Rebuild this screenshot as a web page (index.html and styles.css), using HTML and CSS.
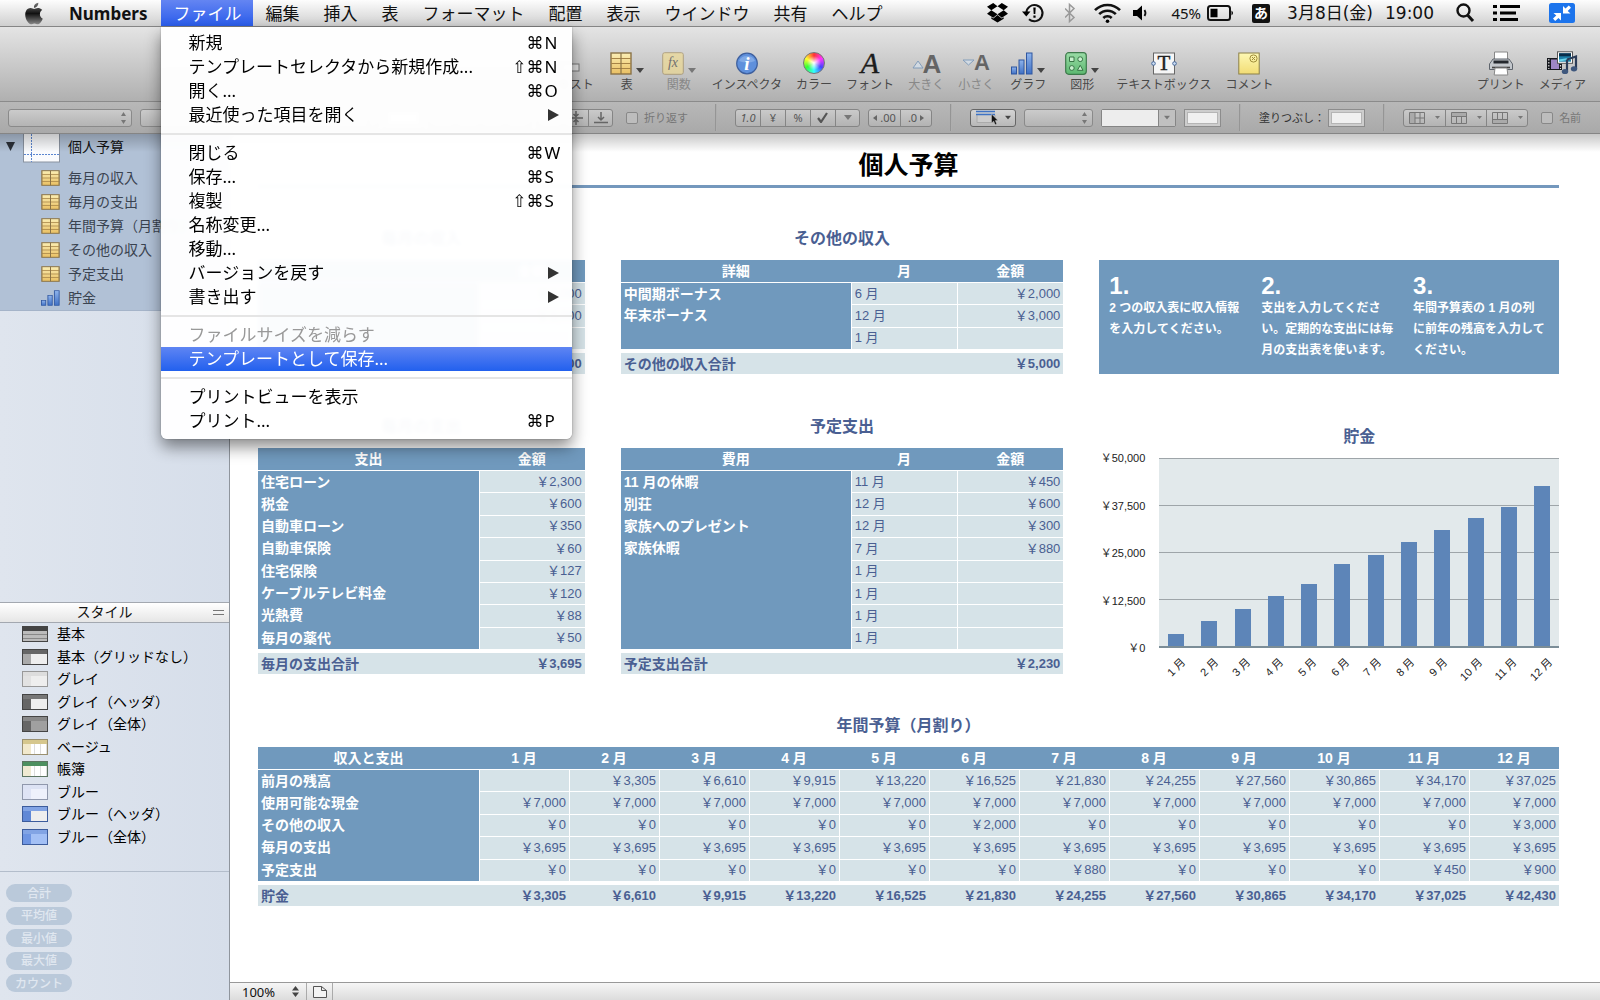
FILE: index.html
```html
<!DOCTYPE html>
<html lang="ja">
<head>
  <meta charset="UTF-8" />
  <meta name="viewport" content="width=device-width, initial-scale=1" />
  <title>Numbers - 個人予算</title>
  <link rel="stylesheet" href="styles.css">
</head>
<body>
  <!-- Shared icons -->
  <svg class="sprite" width="0" height="0" aria-hidden="true">
    <defs>
      <linearGradient id="gold" x1="0" y1="0" x2="0" y2="1"><stop offset="0" stop-color="#fbeeb4"/><stop offset="1" stop-color="#e9bf62"/></linearGradient>
      <linearGradient id="blue" x1="0" y1="0" x2="0" y2="1"><stop offset="0" stop-color="#8fb4ec"/><stop offset="1" stop-color="#3f70c4"/></linearGradient>
      <linearGradient id="green" x1="0" y1="0" x2="0" y2="1"><stop offset="0" stop-color="#9adca6"/><stop offset="1" stop-color="#5cb870"/></linearGradient>
      <linearGradient id="note" x1="0" y1="0" x2="0" y2="1"><stop offset="0" stop-color="#fdf8b4"/><stop offset="1" stop-color="#f2dc74"/></linearGradient>
      <linearGradient id="dark" x1="0" y1="0" x2="0" y2="1"><stop offset="0" stop-color="#777"/><stop offset=".5" stop-color="#111"/><stop offset="1" stop-color="#888"/></linearGradient>
    </defs>
    <symbol id="i-table" viewBox="0 0 22 23">
      <rect x="1" y="1" width="20" height="21" fill="url(#gold)" stroke="#8a7347" stroke-width="1.4"/>
      <path d="M1 6.5h20M1 11.5h20M1 16.5h20" stroke="#a68346"/>
      <path d="M11 1v21" stroke="#8a7347" stroke-width="1.2"/>
    </symbol>
    <symbol id="i-chart" viewBox="0 0 22 23">
      <g fill="url(#blue)" stroke="#2f56a0" stroke-width="1"><rect x=".5" y="15" width="5" height="7"/><rect x="8" y="8" width="5" height="14"/><rect x="15.5" y="1" width="5.5" height="21"/></g>
    </symbol>
    <symbol id="i-drop" viewBox="0 0 8 5"><path d="M0 0h8L4 5z" fill="currentColor"/></symbol>
  </svg>

  <!-- Menu bar -->
  <header class="menubar">
    <nav class="menus">
      <button class="menu-title apple" aria-label="Apple">
        <svg width="18" height="23" viewBox="2 0 20 24"><path fill="url(#dark)" d="M12.152 6.896c-.948 0-2.415-1.078-3.96-1.04-2.04.027-3.91 1.183-4.961 3.014-2.117 3.675-.546 9.103 1.519 12.09 1.013 1.454 2.208 3.09 3.792 3.039 1.52-.065 2.09-.987 3.935-.987 1.831 0 2.35.987 3.96.948 1.637-.026 2.676-1.48 3.676-2.948 1.156-1.688 1.636-3.325 1.662-3.415-.039-.013-3.182-1.221-3.22-4.857-.026-3.04 2.48-4.494 2.597-4.559-1.429-2.09-3.623-2.324-4.39-2.376-2-.156-3.675 1.09-4.61 1.09zM15.53 3.83c.843-1.012 1.4-2.427 1.245-3.83-1.207.052-2.662.805-3.532 1.818-.78.896-1.454 2.338-1.273 3.714 1.338.104 2.715-.688 3.559-1.701"/></svg>
      </button>
      <button class="menu-title app">Numbers</button>
      <div class="menu-wrap">
        <button class="menu-title open">ファイル</button>
        <ul class="menu">
          <li><button class="item">新規<span class="keys">⌘<b>N</b></span></button></li>
          <li><button class="item">テンプレートセレクタから新規作成...<span class="keys">⇧⌘<b>N</b></span></button></li>
          <li><button class="item">開く...<span class="keys">⌘<b>O</b></span></button></li>
          <li><button class="item">最近使った項目を開く<svg class="sub" width="11" height="12"><path d="M0 0l11 6-11 6z"/></svg></button></li>
          <li class="rule"></li>
          <li><button class="item">閉じる<span class="keys">⌘<b>W</b></span></button></li>
          <li><button class="item">保存...<span class="keys">⌘<b>S</b></span></button></li>
          <li><button class="item">複製<span class="keys">⇧⌘<b>S</b></span></button></li>
          <li><button class="item">名称変更...</button></li>
          <li><button class="item">移動...</button></li>
          <li><button class="item">バージョンを戻す<svg class="sub" width="11" height="12"><path d="M0 0l11 6-11 6z"/></svg></button></li>
          <li><button class="item">書き出す<svg class="sub" width="11" height="12"><path d="M0 0l11 6-11 6z"/></svg></button></li>
          <li class="rule"></li>
          <li><button class="item" disabled>ファイルサイズを減らす</button></li>
          <li><button class="item active">テンプレートとして保存...</button></li>
          <li class="rule"></li>
          <li><button class="item">プリントビューを表示</button></li>
          <li><button class="item">プリント...<span class="keys">⌘<b>P</b></span></button></li>
        </ul>
      </div>
      <button class="menu-title">編集</button>
      <button class="menu-title">挿入</button>
      <button class="menu-title">表</button>
      <button class="menu-title">フォーマット</button>
      <button class="menu-title">配置</button>
      <button class="menu-title">表示</button>
      <button class="menu-title">ウインドウ</button>
      <button class="menu-title">共有</button>
      <button class="menu-title">ヘルプ</button>
    </nav>
    <div class="status">
      <svg width="23" height="22" viewBox="0 0 23 22"><path d="M6.200 1L0 4.800l4.300 3.400 6.200-3.900zM14.800 1l-4.300 3.300 6.200 3.900L21 4.800zM4.300 8.300L0 11.700l6.200 4 4.300-3.500zM16.700 8.300l-6.200 3.900 4.300 3.500 6.200-4zM10.500 13.100l-4.200 3.400-2-1.200v1.500l6.200 3.800 6.200-3.800v-1.500l-2 1.200z"/></svg>
      <svg width="31" height="22" viewBox="0 0 31 22"><path d="M4.300 11a8.100 8.100 0 1 1 2.700 6.200" fill="none" stroke="#111" stroke-width="2"/><path d="M0 9.500h8.500L4.300 14.500z"/><path d="M11.300 5.500h2.400l-.4 6.500h-1.600zM11.400 13.500h2.200v2.200h-2.200z"/></svg>
      <svg width="17" height="22" viewBox="0 0 17 22"><path d="M0 6.500l9 9-4.500 4v-17l4.500 4-9 9" fill="none" stroke="#999" stroke-width="1.500"/></svg>
      <svg width="27" height="22" viewBox="0 0 27 22"><g fill="none" stroke="#111" stroke-width="2.600"><path d="M1 8.200a17.500 17.500 0 0 1 25 0"/><path d="M5.200 12.200a11.600 11.600 0 0 1 16.600 0"/><path d="M9.300 16a6 6 0 0 1 8.400 0"/></g><circle cx="13.500" cy="19.300" r="1.800"/></svg>
      <svg width="26" height="22" viewBox="0 0 26 22"><path d="M0 8h4l5-4.500v15L4 14H0z"/><path d="M11.500 8q2 3 0 6" fill="none" stroke="#111" stroke-width="1.800"/></svg>
      <div class="battery">
        <span>45%</span>
        <svg width="33" height="16" viewBox="0 0 33 16"><rect x="1" y="1" width="22" height="14" rx="2.500" fill="none" stroke="#111" stroke-width="2"/><path d="M3.500 3.800h7v8.400h-7zM24.500 5.500q3 2.500 0 5z"/></svg>
      </div>
      <span class="ime">あ</span>
      <div class="clock"><span>3月8日(金)</span><span>19:00</span></div>
      <svg width="25" height="22" viewBox="0 0 25 22"><circle cx="7.500" cy="8.500" r="6" fill="none" stroke="#111" stroke-width="2.400"/><path d="M11.500 13l5.500 6" stroke="#111" stroke-width="3"/></svg>
      <svg width="44" height="22" viewBox="0 0 44 22"><path d="M0 3h4v3H0zM0 9.500h4v3H0zM0 16h4v3H0zM7 3h20v3H7zM7 9.500h16v3H7zM7 16h18v3H7z"/></svg>
      <svg width="26" height="20" viewBox="0 0 26 20"><rect width="26" height="20" rx="2.500" fill="#1c74ec"/><path d="M14 3v7.500h7.500L18.700 8 22 4.800 19.800 2.500 16.500 5.600zM12 17.500V10H4.500l2.800 2.600L4 15.600l2.200 2.300 3.300-3z" fill="#fff"/></svg>
    </div>
  </header>

  <!-- Toolbar -->
  <div class="toolbar">
    <button class="tool">
      <span class="tool-icon"><svg width="22" height="23"><rect x="2" y="12" width="18" height="7" fill="#ddd" stroke="#777"/></svg></span>テキスト
    </button>
    <button class="tool drop">
      <span class="tool-icon"><svg width="22" height="23"><use href="#i-table"/></svg><svg class="tri" width="8" height="5"><use href="#i-drop"/></svg></span>表
    </button>
    <button class="tool drop" disabled>
      <span class="tool-icon"><svg width="22" height="23" viewBox="0 0 22 23"><rect x=".7" y=".7" width="20.600" height="21.600" rx="2" fill="#f3dc8a" stroke="#9c8450"/><text x="11" y="15" text-anchor="middle" font-family="Liberation Serif" font-style="italic" font-size="14" fill="#333">fx</text></svg><svg class="tri" width="8" height="5"><use href="#i-drop"/></svg></span>関数
    </button>
    <button class="tool">
      <span class="tool-icon"><svg width="22" height="23" viewBox="0 0 22 23"><circle cx="11" cy="11.500" r="10.300" fill="#5f90dc" stroke="#3d5f9e" stroke-width="1.200"/><path d="M3 9a8.500 7.500 0 0 1 16 0q-8 3-16 0z" fill="#8fb3ea" opacity=".7"/><text x="11" y="18" text-anchor="middle" font-family="Liberation Serif" font-style="italic" font-weight="bold" font-size="19" fill="#fff">i</text></svg></span>インスペクタ
    </button>
    <button class="tool"><span class="tool-icon"><i class="wheel"></i></span>カラー</button>
    <button class="tool">
      <span class="tool-icon"><svg width="32" height="26" viewBox="0 0 32 26"><text x="16" y="23" text-anchor="middle" font-family="Liberation Serif" font-style="italic" font-size="30" fill="#1c1c1c" stroke="#1c1c1c" stroke-width=".4">A</text></svg></span>フォント
    </button>
    <button class="tool" disabled>
      <span class="tool-icon"><svg width="36" height="26" viewBox="0 0 36 26"><path d="M5 18l5-7 5 7z" fill="#d8e6f4" stroke="#5580b0"/><text x="24" y="23" text-anchor="middle" font-family="Liberation Sans" font-weight="bold" font-size="26" fill="#222">A</text></svg></span>大きく
    </button>
    <button class="tool" disabled>
      <span class="tool-icon"><svg width="36" height="26" viewBox="0 0 36 26"><path d="M5 10h11l-5.500 5z" fill="#d8e6f4" stroke="#5580b0"/><text x="24" y="20" text-anchor="middle" font-family="Liberation Sans" font-weight="bold" font-size="22" fill="#222">A</text></svg></span>小さく
    </button>
    <button class="tool drop roomy">
      <span class="tool-icon"><svg width="22" height="23"><use href="#i-chart"/></svg><svg class="tri" width="8" height="5"><use href="#i-drop"/></svg></span>グラフ
    </button>
    <button class="tool drop roomy">
      <span class="tool-icon"><svg width="22" height="23" viewBox="0 0 22 23"><rect x=".7" y=".7" width="20.600" height="21.600" rx="3" fill="url(#green)" stroke="#3e7a4c" stroke-width="1.200"/><g fill="#c9f0cf" stroke="#2f6b3d" stroke-width=".9"><path d="M4.500 5h4.500v4.500H4.500zM15.200 13.300l2.800 5h-5.600z"/><circle cx="15.200" cy="7.200" r="2.400"/><circle cx="6.800" cy="16" r="2.400"/></g></svg><svg class="tri" width="8" height="5"><use href="#i-drop"/></svg></span>図形
    </button>
    <button class="tool">
      <span class="tool-icon"><svg width="26" height="23" viewBox="0 0 26 23"><rect x="2.500" y="1" width="21" height="21" fill="#f6f6f6" stroke="#666"/><text x="13" y="18" text-anchor="middle" font-family="Liberation Serif" font-size="21" fill="#222" stroke="#222" stroke-width=".4">T</text><circle cx="2.500" cy="11.500" r="1.800" fill="#cfe0f5" stroke="#46679a"/><circle cx="23.500" cy="11.500" r="1.800" fill="#cfe0f5" stroke="#46679a"/></svg></span>テキストボックス
    </button>
    <button class="tool">
      <span class="tool-icon"><svg width="22" height="23" viewBox="0 0 22 23"><rect x=".8" y="1" width="20.400" height="21" fill="url(#note)" stroke="#8c8048"/><circle cx="15.500" cy="6.500" r="3.600" fill="none" stroke="#a08d3a"/><path d="M14 5l3 3m0-3l-3 3" stroke="#a08d3a"/></svg></span>コメント
    </button>
    <span class="grow"></span>
    <button class="tool">
      <span class="tool-icon"><svg width="24" height="25" viewBox="0 0 24 25"><path d="M5.500 1h13v10h-13z" fill="#fff" stroke="#888"/><path d="M4 8h16l3.500 5v5.500H.5V13z" fill="#c3c7cc" stroke="#5e646c"/><path d="M4.500 9.500h15v3h-15z" fill="#24282e"/><path d="M3 16.500h18" stroke="#444" stroke-width="1.600"/><path d="M6 17h12l.8 7H5.200z" fill="#fff" stroke="#888"/></svg></span>プリント
    </button>
    <button class="tool">
      <span class="tool-icon"><svg width="32" height="25" viewBox="0 0 32 25"><path d="M1 7h15v12H1z" fill="#16181d"/><path d="M5 8.500h8V18H5z" fill="#9d86c4"/><path d="M2.800 8v10M14.500 8v10" stroke="#ddd" stroke-width="1.200" stroke-dasharray="1.500 1.500"/><rect x="11.500" y=".8" width="15" height="11.500" fill="#fff" stroke="#555"/><path d="M13 2.300h12v8.400H13z" fill="#1d7fa8"/><path d="M13 2.300h12v3H13z" fill="#092d49"/><path d="M13 8.500l12-2v2l-12 2z" fill="#6bd5ea"/><path d="M21 8.500l9-3v12.500" fill="none" stroke="#2b3c58" stroke-width="2.200"/><path d="M21 8.500v12" stroke="#2b3c58" stroke-width="2.200"/><ellipse cx="19" cy="20.500" rx="3.200" ry="2.600" fill="#3e577d"/><ellipse cx="28" cy="17.800" rx="3.200" ry="2.600" fill="#3e577d"/></svg></span>メディア
    </button>
  </div>

  <!-- Format bar -->
  <div class="formatbar">
    <select class="pop" aria-label="フォント"><option></option></select>
    <select class="pop" aria-label="書体"><option></option></select>
    <select class="pop size" aria-label="サイズ"><option></option></select>
    <button class="well" aria-label="テキストカラー"></button>
    <div class="segs"><button></button><button></button><button></button><button></button></div>
    <div class="segs">
      <button aria-label="上"></button>
      <button aria-label="中央"><svg width="14" height="14"><path d="M0 7h14M7 0v5M7 14V9M4.500 3L7 5.500 9.500 3M4.500 11L7 8.500 9.500 11" fill="none" stroke="#666" stroke-width="1.500"/></svg></button>
      <button aria-label="下"><svg width="14" height="12"><path d="M0 10.500h14M7 0v7M4 5l3 3 3-3" fill="none" stroke="#666" stroke-width="1.500"/></svg></button>
    </div>
    <label class="check wrap"><input type="checkbox">折り返す</label>
    <span class="sep"></span>
    <div class="segs">
      <button><i>1.0</i></button>
      <button>¥</button>
      <button>%</button>
      <button aria-label="チェック"><svg width="12" height="11"><path d="M1 6l3 4 6-9" fill="none" stroke="#555" stroke-width="2.200"/></svg></button>
      <button aria-label="その他"><svg class="tri dim" width="8" height="5"><use href="#i-drop"/></svg></button>
    </div>
    <div class="segs wide">
      <button><svg width="4" height="6"><path d="M4 0v6L0 3z" fill="#666"/></svg>.00</button>
      <button>.0<svg width="4" height="6"><path d="M0 0v6l4-3z" fill="#666"/></svg></button>
    </div>
    <span class="sep"></span>
    <button class="borders" aria-label="枠線">
      <svg width="24" height="15" viewBox="0 0 24 15"><path d="M1 5v7.500h18V5" fill="#ccc" stroke="#aaa"/><path d="M0 1.500h19M0 4.500h19" stroke="#3f73c4" stroke-width="1.400"/><path d="M15.500 4v9l2.200-1.800 1.500 3.500 1.600-.7-1.500-3.400h2.700z" fill="#111" stroke="#ddd" stroke-width=".4"/></svg>
      <svg width="6" height="5" viewBox="0 0 8 6" class="tri"><use href="#i-drop"/></svg>
    </button>
    <select class="pop line" aria-label="線"><option></option></select>
    <div class="combo"><input type="text" aria-label="線の太さ"><button aria-label="選択"><svg class="tri dim" width="6" height="5" viewBox="0 0 8 6"><use href="#i-drop"/></svg></button></div>
    <button class="well" aria-label="線のカラー"></button>
    <span class="sep"></span>
    <label class="fill" for="fill">塗りつぶし：</label>
    <button class="well" id="fill"></button>
    <span class="sep"></span>
    <div class="segs headers">
      <button aria-label="ヘッダ列"><svg width="16" height="12"><path d="M1 1h5v10H1z" fill="#aaa"/><path d="M.5.500h15v11H.5zM6 .5v11M11 .5v11M6 6h10" fill="none" stroke="#777"/></svg><svg class="tri dim" width="5" height="5" viewBox="0 0 8 6"><use href="#i-drop"/></svg></button>
      <button aria-label="ヘッダ行"><svg width="16" height="12"><path d="M1 1h14v3H1z" fill="#aaa"/><path d="M.5.500h15v11H.5zM.5 4.500h15M5.500 5v6M10.500 5v6" fill="none" stroke="#777"/></svg><svg class="tri dim" width="5" height="5" viewBox="0 0 8 6"><use href="#i-drop"/></svg></button>
      <button aria-label="フッタ行"><svg width="16" height="12"><path d="M1 8h14v3H1z" fill="#aaa"/><path d="M.5.500h15v11H.5zM.5 7.500h15M5.500 0v7M10.500 0v7" fill="none" stroke="#777"/></svg><svg class="tri dim" width="5" height="5" viewBox="0 0 8 6"><use href="#i-drop"/></svg></button>
    </div>
    <label class="check"><input type="checkbox">名前</label>
  </div>

  <div class="workspace">
    <!-- Sidebar -->
    <aside class="sidebar">
      <div class="sheets">
        <div class="sheet">
          <svg width="9" height="9"><path d="M0 0h9L4.500 9z" fill="#2b3038"/></svg>
          <svg class="page" width="37" height="29"><rect x=".5" y="-1" width="36" height="29" fill="#fafbfd" stroke="#8a93a0"/><path d="M8.500 0v28M1 20.500h35" stroke="#5b86d0" stroke-dasharray="2 1"/></svg>
          個人予算
        </div>
        <ul class="objects">
          <li><svg width="19" height="16" viewBox="0 0 22 23" preserveAspectRatio="none"><use href="#i-table"/></svg>毎月の収入</li>
          <li><svg width="19" height="16" viewBox="0 0 22 23" preserveAspectRatio="none"><use href="#i-table"/></svg>毎月の支出</li>
          <li><svg width="19" height="16" viewBox="0 0 22 23" preserveAspectRatio="none"><use href="#i-table"/></svg>年間予算（月割り）</li>
          <li><svg width="19" height="16" viewBox="0 0 22 23" preserveAspectRatio="none"><use href="#i-table"/></svg>その他の収入</li>
          <li><svg width="19" height="16" viewBox="0 0 22 23" preserveAspectRatio="none"><use href="#i-table"/></svg>予定支出</li>
          <li><svg width="19" height="16" viewBox="0 0 22 23" preserveAspectRatio="none"><use href="#i-chart"/></svg>貯金</li>
        </ul>
      </div>
      <h2 class="styles-title">スタイル<span class="grip"></span></h2>
      <ul class="styles">
        <li><i class="swatch basic"></i>基本</li>
        <li><i class="swatch basic-plain"></i>基本（グリッドなし）</li>
        <li><i class="swatch gray"></i>グレイ</li>
        <li><i class="swatch gray-head"></i>グレイ（ヘッダ）</li>
        <li><i class="swatch gray-full"></i>グレイ（全体）</li>
        <li><i class="swatch beige"></i>ベージュ</li>
        <li><i class="swatch ledger"></i>帳簿</li>
        <li><i class="swatch blue"></i>ブルー</li>
        <li><i class="swatch blue-head"></i>ブルー（ヘッダ）</li>
        <li><i class="swatch blue-full"></i>ブルー（全体）</li>
      </ul>
      <div class="quick">
        <button>合計</button>
        <button>平均値</button>
        <button>最小値</button>
        <button>最大値</button>
        <button>カウント</button>
      </div>
    </aside>

    <!-- Sheet -->
    <main class="canvas">
      <div class="sheet-body">
        <h1>個人予算</h1>
        <div class="columns">
          <div class="column">
            <section>
              <h3>毎月の収入</h3>
              <table class="small two">
                <thead><tr><th class="first"></th><th>金額</th></tr></thead>
                <tbody>
                  <tr><th></th><td>￥4,000</td></tr>
                  <tr><th></th><td>￥3,000</td></tr>
                  <tr><th></th><td></td></tr>
                </tbody>
                <tfoot><tr><th></th><td>￥7,000</td></tr></tfoot>
              </table>
            </section>
            <section>
              <h3>毎月の支出</h3>
              <table class="large two">
                <thead><tr><th class="first">支出</th><th>金額</th></tr></thead>
                <tbody>
                  <tr><th>住宅ローン</th><td>￥2,300</td></tr>
                  <tr><th>税金</th><td>￥600</td></tr>
                  <tr><th>自動車ローン</th><td>￥350</td></tr>
                  <tr><th>自動車保険</th><td>￥60</td></tr>
                  <tr><th>住宅保険</th><td>￥127</td></tr>
                  <tr><th>ケーブルテレビ料金</th><td>￥120</td></tr>
                  <tr><th>光熱費</th><td>￥88</td></tr>
                  <tr><th>毎月の薬代</th><td>￥50</td></tr>
                </tbody>
                <tfoot><tr><th>毎月の支出合計</th><td>￥3,695</td></tr></tfoot>
              </table>
            </section>
          </div>
          <div class="column">
            <section>
              <h3>その他の収入</h3>
              <table class="small three">
                <thead><tr><th class="first">詳細</th><th>月</th><th>金額</th></tr></thead>
                <tbody>
                  <tr><th>中間期ボーナス</th><td class="month">6 月</td><td>￥2,000</td></tr>
                  <tr><th>年末ボーナス</th><td class="month">12 月</td><td>￥3,000</td></tr>
                  <tr><th></th><td class="month">1 月</td><td></td></tr>
                </tbody>
                <tfoot><tr><th>その他の収入合計</th><td></td><td>￥5,000</td></tr></tfoot>
              </table>
            </section>
            <section>
              <h3>予定支出</h3>
              <table class="large three">
                <thead><tr><th class="first">費用</th><th>月</th><th>金額</th></tr></thead>
                <tbody>
                  <tr><th>11 月の休暇</th><td class="month">11 月</td><td>￥450</td></tr>
                  <tr><th>別荘</th><td class="month">12 月</td><td>￥600</td></tr>
                  <tr><th>家族へのプレゼント</th><td class="month">12 月</td><td>￥300</td></tr>
                  <tr><th>家族休暇</th><td class="month">7 月</td><td>￥880</td></tr>
                  <tr><th></th><td class="month">1 月</td><td></td></tr>
                  <tr><th></th><td class="month">1 月</td><td></td></tr>
                  <tr><th></th><td class="month">1 月</td><td></td></tr>
                  <tr><th></th><td class="month">1 月</td><td></td></tr>
                </tbody>
                <tfoot><tr><th>予定支出合計</th><td></td><td>￥2,230</td></tr></tfoot>
              </table>
            </section>
          </div>
          <div class="column right">
            <div class="steps">
              <div><strong>1.</strong><p>2 つの収入表に収入情報<br>を入力してください。</p></div>
              <div><strong>2.</strong><p>支出を入力してくださ<br>い。定期的な支出には毎<br>月の支出表を使います。</p></div>
              <div><strong>3.</strong><p>年間予算表の 1 月の列<br>に前年の残高を入力して<br>ください。</p></div>
            </div>
            <section class="chart">
              <h3>貯金</h3>
              <div class="y-axis"><span>￥50,000</span><span>￥37,500</span><span>￥25,000</span><span>￥12,500</span><span>￥0</span></div>
              <div class="plot">
                <div><i style="height:6.6%"></i></div>
                <div><i style="height:13.2%"></i></div>
                <div><i style="height:19.8%"></i></div>
                <div><i style="height:26.4%"></i></div>
                <div><i style="height:33.1%"></i></div>
                <div><i style="height:43.7%"></i></div>
                <div><i style="height:48.5%"></i></div>
                <div><i style="height:55.1%"></i></div>
                <div><i style="height:61.7%"></i></div>
                <div><i style="height:68.3%"></i></div>
                <div><i style="height:74.1%"></i></div>
                <div><i style="height:84.9%"></i></div>
              </div>
              <div class="x-axis">
                <div><span>1 月</span></div><div><span>2 月</span></div><div><span>3 月</span></div><div><span>4 月</span></div><div><span>5 月</span></div><div><span>6 月</span></div>
                <div><span>7 月</span></div><div><span>8 月</span></div><div><span>9 月</span></div><div><span>10 月</span></div><div><span>11 月</span></div><div><span>12 月</span></div>
              </div>
            </section>
          </div>
        </div>

        <section class="annual">
          <h3>年間予算（月割り）</h3>
          <table class="year">
            <thead>
              <tr><th class="first">収入と支出</th><th>1 月</th><th>2 月</th><th>3 月</th><th>4 月</th><th>5 月</th><th>6 月</th><th>7 月</th><th>8 月</th><th>9 月</th><th>10 月</th><th>11 月</th><th>12 月</th></tr>
            </thead>
            <tbody>
              <tr><th>前月の残高</th><td></td><td>￥3,305</td><td>￥6,610</td><td>￥9,915</td><td>￥13,220</td><td>￥16,525</td><td>￥21,830</td><td>￥24,255</td><td>￥27,560</td><td>￥30,865</td><td>￥34,170</td><td>￥37,025</td></tr>
              <tr><th>使用可能な現金</th><td>￥7,000</td><td>￥7,000</td><td>￥7,000</td><td>￥7,000</td><td>￥7,000</td><td>￥7,000</td><td>￥7,000</td><td>￥7,000</td><td>￥7,000</td><td>￥7,000</td><td>￥7,000</td><td>￥7,000</td></tr>
              <tr><th>その他の収入</th><td>￥0</td><td>￥0</td><td>￥0</td><td>￥0</td><td>￥0</td><td>￥2,000</td><td>￥0</td><td>￥0</td><td>￥0</td><td>￥0</td><td>￥0</td><td>￥3,000</td></tr>
              <tr><th>毎月の支出</th><td>￥3,695</td><td>￥3,695</td><td>￥3,695</td><td>￥3,695</td><td>￥3,695</td><td>￥3,695</td><td>￥3,695</td><td>￥3,695</td><td>￥3,695</td><td>￥3,695</td><td>￥3,695</td><td>￥3,695</td></tr>
              <tr><th>予定支出</th><td>￥0</td><td>￥0</td><td>￥0</td><td>￥0</td><td>￥0</td><td>￥0</td><td>￥880</td><td>￥0</td><td>￥0</td><td>￥0</td><td>￥450</td><td>￥900</td></tr>
            </tbody>
            <tfoot>
              <tr><th>貯金</th><td>￥3,305</td><td>￥6,610</td><td>￥9,915</td><td>￥13,220</td><td>￥16,525</td><td>￥21,830</td><td>￥24,255</td><td>￥27,560</td><td>￥30,865</td><td>￥34,170</td><td>￥37,025</td><td>￥42,430</td></tr>
            </tfoot>
          </table>
        </section>
      </div>
      <footer class="statusbar">
        <button class="zoom">100%<svg width="7" height="11"><path d="M0 4.500h7L3.500 0zM0 6.500h7L3.500 11z" fill="#444"/></svg></button>
        <button class="view" aria-label="プリントビュー"><svg width="14" height="12"><path d="M.5.500h8l5 4v7H.5zM8.500.500v4h5" fill="#f4f4f4" stroke="#555"/></svg></button>
      </footer>
    </main>
  </div>
</body>
</html>
```

FILE: styles.css
```css
* {
  box-sizing: border-box;
}

body {
  margin: 0;
  height: 100vh;
  display: flex;
  flex-direction: column;
  overflow: hidden;
  font-family: "Noto Sans", "Noto Sans CJK JP", sans-serif;
  color: #111;
}

button, input, select {
  font: inherit;
  color: inherit;
  margin: 0;
  padding: 0;
  border: 0;
  background: none;
}

ul {
  list-style: none;
  margin: 0;
  padding: 0;
}

svg {
  display: block;
  flex: none;
}

.sprite {
  position: absolute;
}

/* Menu bar */
.menubar {
  display: flex;
  justify-content: space-between;
  height: 27px;
  flex: none;
  background: linear-gradient(#fdfdfd, #cfcfcf);
  border-bottom: 1px solid #858585;
  font-size: 17px;
  line-height: 26px;
  position: relative;
  z-index: 2;
}

.menus {
  display: flex;
  padding-left: 13px;
}

.menu-title {
  padding: 1px 12px 0;
  height: 26px;
  white-space: nowrap;
}

.apple {
  padding-right: 14px;
}

.app {
  padding-right: 14px;
  font-weight: 700;
}

.menu-wrap {
  position: relative;
}

.open {
  background: linear-gradient(#6485f2, #2a5ceb);
  color: #fff;
}

.status {
  display: flex;
  align-items: center;
  gap: 12px;
  padding-right: 25px;
  font-family: "DejaVu Sans", "Noto Sans CJK JP", sans-serif;
}

.battery {
  display: flex;
  align-items: center;
  gap: 6px;
  font-family: "Noto Sans", sans-serif;
  font-size: 15px;
}

.ime {
  width: 18px;
  height: 19px;
  margin-right: 5px;
  border-radius: 2px;
  background: #111;
  color: #fff;
  font-size: 14px;
  font-weight: 700;
  line-height: 18px;
  text-align: center;
}

.clock {
  display: flex;
  gap: 12px;
  padding-right: 10px;
  white-space: nowrap;
}

/* Drop-down menu */
.menu {
  position: absolute;
  top: 27px;
  left: 0;
  width: 411px;
  padding: 4px 0 6px;
  background: rgba(255, 255, 255, 0.97);
  backdrop-filter: blur(2px);
  border-radius: 0 0 6px 6px;
  box-shadow: 0 8px 16px rgba(0, 0, 0, 0.45), 0 0 2px rgba(0, 0, 0, 0.3);
}

.item {
  display: flex;
  align-items: center;
  width: 100%;
  height: 24px;
  padding: 0 13px 0 27px;
  line-height: 24px;
  color: #000;
  text-align: left;
}

.item:disabled {
  color: #999;
}

.item.active {
  background: linear-gradient(#5f85f3, #2260ee);
  color: #fff;
}

.keys {
  margin-left: auto;
  display: flex;
  font-family: "DejaVu Sans", sans-serif;
}

.keys b {
  width: 15px;
  margin-left: 1px;
  font-family: "Noto Sans", sans-serif;
  font-weight: 400;
}

.sub {
  margin-left: auto;
  fill: #333;
}

.rule {
  height: 14px;
  padding-top: 6px;
}

.rule::before {
  content: "";
  display: block;
  height: 2px;
  background: #e5e5e5;
}

/* Toolbar */
.toolbar {
  display: flex;
  flex: none;
  height: 75px;
  padding: 23px 7px 0 539px;
  background: linear-gradient(#e4e4e4, #b0b0b0);
  border-bottom: 1px solid #8b8b8b;
}

.tool {
  display: flex;
  flex-direction: column;
  align-items: center;
  height: 46px;
  padding: 0 7px;
  font-size: 12px;
  line-height: 18px;
  color: #484848;
  white-space: nowrap;
}

.tool.drop {
  width: 52px;
}

.tool.roomy {
  width: 54px;
}

.tool:disabled {
  color: #888;
}

.tool:disabled .tool-icon {
  opacity: 0.6;
}

.tool-icon {
  display: flex;
  align-items: center;
  gap: 4px;
  height: 26px;
}

.tri {
  color: #444;
}

.tool .tri {
  align-self: flex-end;
  margin-bottom: 3px;
}

.tri.dim {
  color: #777;
}

.wheel {
  width: 22px;
  height: 22px;
  border: 1px solid #777;
  border-radius: 50%;
  background: radial-gradient(#fff, rgba(255, 255, 255, 0) 50%), conic-gradient(#f33, #f3f, #44f, #3ff, #3f3, #ff3, #f33);
}

.grow {
  flex: 1;
}

/* Format bar */
.formatbar {
  display: flex;
  align-items: center;
  gap: 8px;
  flex: none;
  height: 32px;
  padding: 0 0 0 8px;
  background: linear-gradient(#b8b8b8, #a9a9a9);
  border-bottom: 1px solid #858585;
  font-size: 11px;
  line-height: 16px;
  color: #444;
  overflow: hidden;
}

.formatbar > * {
  flex: none;
}

.pop {
  appearance: none;
  width: 124px;
  height: 18px;
  border: 1px solid #8a8a8a;
  border-radius: 3px;
  background: url("data:image/svg+xml,%3Csvg xmlns='http://www.w3.org/2000/svg' width='5' height='12'%3E%3Cpath d='M0 4h5L2.500 0zM0 8h5L2.500 12z' fill='%23777'/%3E%3C/svg%3E") no-repeat right 5px center, linear-gradient(#cbcbcb, #b4b4b4);
}

.pop.size {
  width: 105px;
}

.pop.line {
  width: 69px;
}

.well {
  width: 37px;
  height: 18px;
  border: 1px solid #8c8c8c;
  background: #f0f0f0;
  box-shadow: inset 0 0 0 2px #cdcdcd, inset 0 0 0 3px #b5b5b5;
}

.segs {
  display: flex;
  height: 18px;
  border: 1px solid #858585;
  border-radius: 3px;
  background: linear-gradient(#cacaca, #b3b3b3);
}

.segs button {
  display: flex;
  align-items: center;
  justify-content: center;
  width: 25px;
  color: #555;
}

.segs button:first-child {
  width: 24px;
}

.segs button:last-child {
  width: 24px;
}

.segs button + button {
  border-left: 1px solid #858585;
}

.segs.wide button {
  width: 31px;
  gap: 3px;
}

.segs.headers button {
  width: 41px;
  gap: 10px;
}

.check {
  display: flex;
  align-items: center;
  gap: 6px;
  color: #777;
}

.check.wrap {
  margin: 0 9px 0 5px;
}

.check input {
  appearance: none;
  width: 12px;
  height: 12px;
  border: 1px solid #888;
  border-radius: 2px;
  background: #bdbdbd;
}

.headers + .check {
  margin-left: 5px;
}

.sep {
  width: 2px;
  height: 27px;
  margin: 0 10px;
  background: linear-gradient(90deg, #888, #bbb);
}

.borders {
  display: flex;
  align-items: center;
  justify-content: center;
  gap: 5px;
  width: 46px;
  height: 18px;
  border: 1px solid #666;
  border-radius: 3px;
  background: linear-gradient(#d4d4d4, #b8b8b8);
}

.combo {
  display: flex;
  height: 18px;
  border: 1px solid #858585;
  border-radius: 2px;
}

.combo input {
  width: 56px;
  background: #ededed;
}

.combo button {
  display: flex;
  align-items: center;
  justify-content: center;
  width: 17px;
  border-left: 1px solid #858585;
  background: #c0c0c0;
}

.fill {
  margin-right: -5px;
  color: #333;
}

/* Workspace */
.workspace {
  display: flex;
  flex: 1;
  min-height: 0;
  position: relative;
}

/* shadow cast by the bars above */
.workspace::before {
  content: "";
  position: absolute;
  top: 0;
  left: 0;
  right: 0;
  height: 18px;
  background: linear-gradient(rgba(0, 0, 0, 0.22), rgba(0, 0, 0, 0));
  pointer-events: none;
}

/* Sidebar */
.sidebar {
  display: flex;
  flex-direction: column;
  width: 230px;
  flex: none;
  border-right: 1px solid #8f959d;
  background: linear-gradient(90deg, #dfe5ee, #d6deea);
  font-size: 14px;
}

.sheets {
  flex: 1;
}

.sheet {
  display: flex;
  align-items: center;
  gap: 8px;
  height: 32px;
  padding: 0 0 8px 6px;
  background: #b1c1d6;
  white-space: nowrap;
}

.page {
  align-self: flex-start;
}

.objects {
  background: #b1c1d6;
  border-bottom: 1px solid #a5b4c9;
}

.objects li {
  display: flex;
  align-items: center;
  gap: 8px;
  height: 24px;
  padding-left: 41px;
  line-height: 24px;
  color: #3a4350;
  white-space: nowrap;
}

.styles-title {
  position: relative;
  height: 21px;
  margin: 0;
  padding-right: 20px;
  border: solid #a3a8b0;
  border-width: 1px 0;
  background: linear-gradient(#fff, #e6e6e6);
  font-size: 14px;
  font-weight: 400;
  line-height: 18px;
  text-align: center;
}

.grip {
  position: absolute;
  top: 7px;
  right: 5px;
  width: 11px;
  height: 5px;
  border: solid #777;
  border-width: 1px 0;
}

.styles {
  display: flex;
  flex-direction: column;
  height: 225px;
}

.styles li {
  display: flex;
  align-items: center;
  gap: 9px;
  flex: 1;
  padding-left: 22px;
  line-height: 22px;
  color: #000;
}

/* table style swatches: header strip, first column, body */
.swatch {
  --line: #777;
  --head: #777;
  --side: #aaa;
  --body: #eee;
  width: 26px;
  height: 16px;
  border: 1px solid var(--line);
  background:
    linear-gradient(var(--head), var(--head)) top / 100% 4px no-repeat,
    linear-gradient(var(--side), var(--side)) left / 8px 100% no-repeat,
    var(--body);
}

.basic {
  --line: #444;
  background:
    linear-gradient(#444, #444) top / 100% 4px no-repeat,
    repeating-linear-gradient(#bbb 0 3px, #888 3px 4px);
}

.basic-plain {
  --line: #444;
  --head: #666;
}

.gray {
  --line: #999;
  --head: #ddd;
  --side: #e2e2e2;
}

.gray-head {
  --line: #444;
  --side: #666;
}

.gray-full {
  --line: #444;
  --head: #888;
  --side: #666;
  --body: #a0a0a0;
}

.beige {
  --line: #9a9070;
  --head: #d6c78d;
  --side: #f2e9cc;
  --body: repeating-linear-gradient(90deg, #fff 0 5px, #ddd 5px 6px);
}

.ledger {
  --line: #5d7562;
  --head: #4d9060;
  --side: #f0ead2;
  --body: repeating-linear-gradient(90deg, #fff 0 5px, #ddd 5px 6px);
}

.blue {
  --line: #9098ac;
  --head: #dde3f4;
  --side: #dfe4f5;
  --body: #eef1fb;
}

.blue-head {
  --line: #3c5c9c;
  --head: #82a4e4;
  --side: #6088d6;
}

.blue-full {
  --line: #3c5c9c;
  --head: #82a4e4;
  --side: #6e95e2;
  --body: #a3c0f5;
}

.quick {
  display: flex;
  flex-direction: column;
  height: 129px;
  margin-top: 23px;
  padding: 12px 6px 8px;
  border-top: 1px solid #b3bdcb;
  justify-content: space-between;
  align-items: flex-start;
}

.quick button {
  width: 66px;
  height: 18px;
  border-radius: 9px;
  background: #bac9da;
  color: #e0e7f0;
  font-size: 12px;
  font-weight: 500;
  line-height: 17px;
}

/* Sheet */
.canvas {
  display: flex;
  flex-direction: column;
  flex: 1;
  min-width: 0;
  background: #fff;
}

.sheet-body {
  flex: 1;
  padding: 12px 41px 0 28px;
}

h1 {
  margin: 0;
  padding-bottom: 3px;
  border-bottom: 3px solid #7498bd;
  font-size: 25px;
  line-height: 36px;
  color: #000;
  text-align: center;
}

h3 {
  margin: 0 0 10px;
  font-size: 16px;
  line-height: 24px;
  color: #4a5f92;
  text-align: center;
}

.columns {
  display: grid;
  grid-template-columns: 327fr 443fr 460fr;
  gap: 36px;
  margin-top: 38px;
}

.column {
  display: flex;
  flex-direction: column;
  gap: 40px;
  min-width: 0;
}

table {
  width: 100%;
  table-layout: fixed;
  border-spacing: 0;
  font-family: "Liberation Sans", "Noto Sans CJK JP", sans-serif;
  line-height: 20px;
  color: #4a5f92;
}

.small {
  height: 114px;
}

.large {
  height: 226px;
}

.year {
  height: 159px;
}

th, td {
  padding: 0 3px;
  font-size: 13px;
  white-space: nowrap;
}

thead th, tbody th {
  background: #7099bd;
  color: #fff;
}

thead tr, tbody tr {
  height: 22px;
}

tbody th, tfoot th {
  font-size: 14px;
  text-align: left;
}

thead th {
  font-size: 14px;
}

tbody tr:first-child th {
  border-top: 1px solid #fff;
}

td {
  text-align: right;
}

tbody td {
  background: #d6e3e8;
  border-top: 1px solid #fff;
  border-left: 1px solid #fff;
}

td.month {
  text-align: left;
}

tfoot tr {
  height: 25px;
}

tfoot th, tfoot td {
  background: #d6e3e8;
  border-top: 4px solid #fff;
  font-weight: 700;
}

.first {
  width: 221px;
}

.three .first {
  width: 230px;
}

.annual {
  margin-top: 37px;
}

/* Instructions */
.steps {
  display: grid;
  grid-template-columns: repeat(3, 1fr);
  gap: 6px;
  height: 114px;
  padding: 13px 0 0 10px;
  background: #7099bd;
  color: #fff;
  font-family: "Liberation Sans", "Noto Sans CJK JP", sans-serif;
  font-size: 12px;
  font-weight: 700;
  line-height: 21px;
  white-space: nowrap;
}

.steps strong {
  display: block;
  font-size: 24px;
  line-height: 25px;
}

.steps p {
  margin: 0;
}

.column.right {
  gap: 49px;
  padding-top: 34px;
}

/* Chart */
.chart {
  display: grid;
  grid-template-columns: 60px 1fr;
  font-family: "Liberation Sans", "Noto Sans CJK JP", sans-serif;
  font-size: 11px;
  color: #222;
}

.chart h3 {
  grid-column: 2;
  margin-bottom: 11px;
  font-family: "Noto Sans CJK JP", sans-serif;
}

.y-axis {
  display: flex;
  flex-direction: column;
  justify-content: space-between;
  grid-column: 1;
  margin: -8px 0;
  padding-right: 14px;
  line-height: 16px;
  text-align: right;
}

.plot {
  display: flex;
  height: 190px;
  border-bottom: 2px solid #7b8d97;
  background: linear-gradient(#9ea5a9 1px, #e2e9eb 1px) 0 0 / 100% 47px;
}

.plot div {
  display: flex;
  align-items: flex-end;
  justify-content: center;
  flex: 1;
}

.plot i {
  width: 16px;
  background: #5d85b8;
}

.x-axis {
  display: flex;
  grid-column: 2;
  height: 28px;
}

.x-axis div {
  display: flex;
  justify-content: flex-end;
  flex: 1;
  padding: 5px 9px 0 0;
}

.x-axis span {
  height: 14px;
  line-height: 14px;
  white-space: nowrap;
  transform: rotate(-45deg);
  transform-origin: 100% 50%;
}

/* Status bar */
.statusbar {
  display: flex;
  flex: none;
  height: 18px;
  border-top: 1px solid #999;
  background: linear-gradient(#f6f6f6, #dcdcdc);
  font-size: 13px;
  line-height: 18px;
}

.statusbar button {
  display: flex;
  align-items: center;
  border-right: 1px solid #aaa;
}

.zoom {
  justify-content: space-between;
  width: 77px;
  padding: 0 7px 0 12px;
}

.view {
  justify-content: center;
  width: 26px;
}
```
